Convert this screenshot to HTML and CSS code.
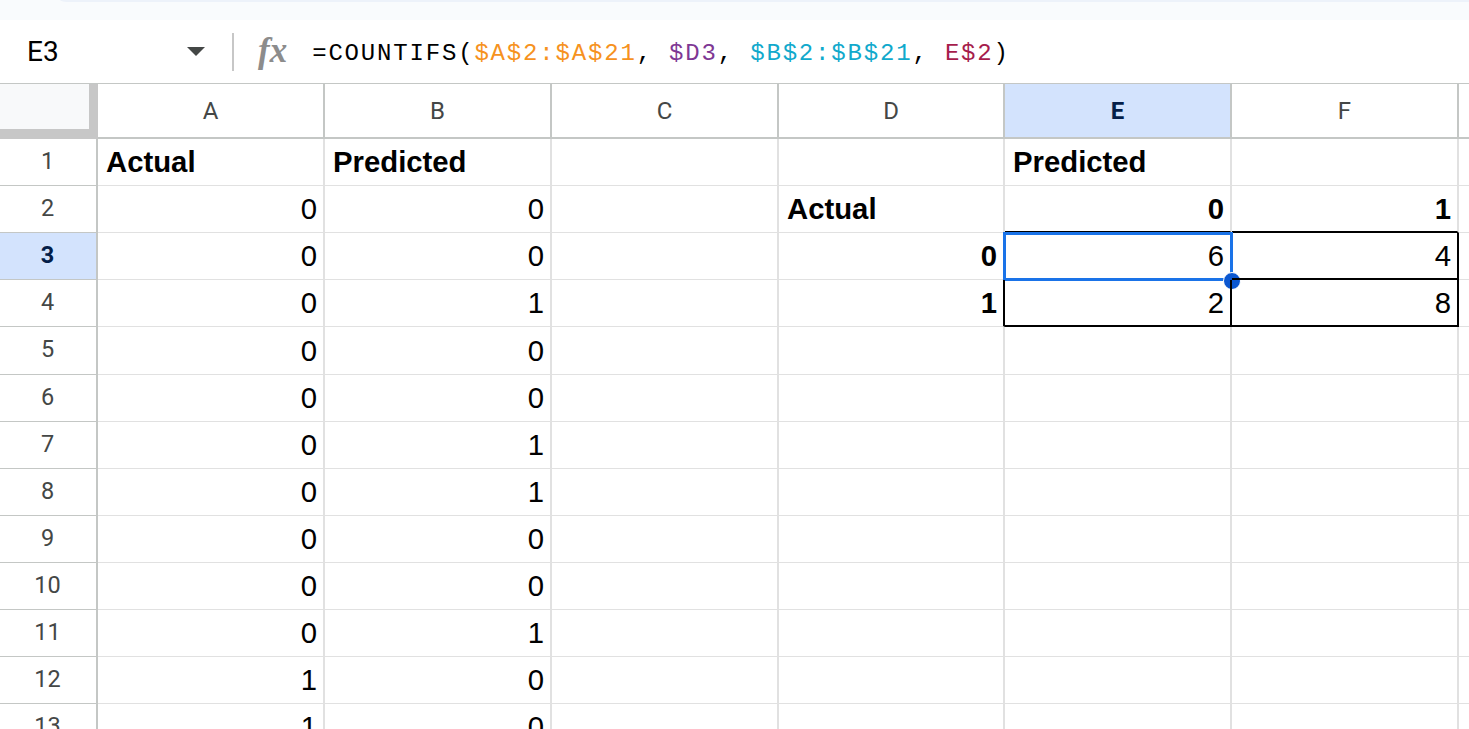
FILE: index.html
```html
<!DOCTYPE html>
<html>
<head>
<meta charset="utf-8">
<link rel="stylesheet" href="styles.css">
</head>
<body>
<div class="top"><div class="top-edge"></div></div>
<div class="fbar">
  <div class="namebox">
    <span class="nb-text">E3</span>
    <svg class="nb-arrow" width="18" height="9" viewBox="0 0 18 9"><polygon points="0,0 18,0 9,9" fill="#444746"/></svg>
  </div>
  <div class="sep"></div>
  <div class="fx">fx</div>
  <div class="formula">=COUNTIFS(<span class="f1">$A$2:$A$21</span>, <span class="f2">$D3</span>, <span class="f3">$B$2:$B$21</span>, <span class="f4">E$2</span>)</div>
</div>
<div class="sheet">
  <div class="corner"></div>
  <div class="ch">A</div><div class="ch">B</div><div class="ch">C</div><div class="ch">D</div><div class="ch ch-sel">E</div><div class="ch">F</div><div class="ch"></div>

  <div class="rh">1</div>
  <div class="c b">Actual</div><div class="c b">Predicted</div><div class="c"></div><div class="c"></div><div class="c b">Predicted</div><div class="c"></div><div class="c"></div>

  <div class="rh">2</div>
  <div class="c r">0</div><div class="c r">0</div><div class="c"></div><div class="c b">Actual</div><div class="c r b kb">0</div><div class="c r b kb">1</div><div class="c"></div>

  <div class="rh rh-sel">3</div>
  <div class="c r">0</div><div class="c r">0</div><div class="c"></div><div class="c r b kr">0</div>
  <div class="c r kr kb cur">6<div class="selbox"></div><div class="handle"></div></div>
  <div class="c r kr kb">4</div><div class="c"></div>

  <div class="rh">4</div>
  <div class="c r">0</div><div class="c r">1</div><div class="c"></div><div class="c r b kr">1</div><div class="c r kr kb">2</div><div class="c r kr kb">8</div><div class="c"></div>

  <div class="rh">5</div>
  <div class="c r">0</div><div class="c r">0</div><div class="c"></div><div class="c"></div><div class="c"></div><div class="c"></div><div class="c"></div>

  <div class="rh">6</div>
  <div class="c r">0</div><div class="c r">0</div><div class="c"></div><div class="c"></div><div class="c"></div><div class="c"></div><div class="c"></div>

  <div class="rh">7</div>
  <div class="c r">0</div><div class="c r">1</div><div class="c"></div><div class="c"></div><div class="c"></div><div class="c"></div><div class="c"></div>

  <div class="rh">8</div>
  <div class="c r">0</div><div class="c r">1</div><div class="c"></div><div class="c"></div><div class="c"></div><div class="c"></div><div class="c"></div>

  <div class="rh">9</div>
  <div class="c r">0</div><div class="c r">0</div><div class="c"></div><div class="c"></div><div class="c"></div><div class="c"></div><div class="c"></div>

  <div class="rh">10</div>
  <div class="c r">0</div><div class="c r">0</div><div class="c"></div><div class="c"></div><div class="c"></div><div class="c"></div><div class="c"></div>

  <div class="rh">11</div>
  <div class="c r">0</div><div class="c r">1</div><div class="c"></div><div class="c"></div><div class="c"></div><div class="c"></div><div class="c"></div>

  <div class="rh">12</div>
  <div class="c r">1</div><div class="c r">0</div><div class="c"></div><div class="c"></div><div class="c"></div><div class="c"></div><div class="c"></div>

  <div class="rh">13</div>
  <div class="c r">1</div><div class="c r">0</div><div class="c"></div><div class="c"></div><div class="c"></div><div class="c"></div><div class="c"></div>
</div>
</body>
</html>
```

FILE: styles.css
```css
* { box-sizing: border-box; }
html, body { margin: 0; padding: 0; }
body {
  width: 1469px;
  height: 729px;
  overflow: hidden;
  background: #ffffff;
  font-family: "Liberation Sans", Arial, sans-serif;
}
.top {
  height: 20px;
  background: #f9fbfd;
}
.top-edge {
  margin-left: 60px;
  height: 2px;
  background: #edf2fa;
  border-bottom-left-radius: 10px 2px;
}
.fbar {
  height: 64px;
  display: flex;
  align-items: center;
  border-bottom: 1px solid #c4c7c5;
  background: #ffffff;
}
.namebox {
  width: 232px;
  padding-left: 27px;
  padding-right: 27px;
  display: flex;
  align-items: center;
  justify-content: space-between;
}
.nb-text {
  font-family: Roboto, "Liberation Sans", sans-serif;
  font-size: 28px;
  color: #000000;
  line-height: 1;
}
.nb-arrow { display: block; }
.sep {
  width: 2px;
  height: 38px;
  background: #c7c7c7;
}
.fx {
  margin-left: 24px;
  font-family: "Liberation Serif", serif;
  font-style: italic;
  font-weight: bold;
  font-size: 35px;
  color: #8c8c8c;
  line-height: 1;
  margin-top: -2px;
}
.formula {
  margin-left: 25px;
  font-family: "Liberation Mono", monospace;
  font-size: 24px;
  letter-spacing: 1.82px;
  color: #000000;
  line-height: 1;
  margin-top: 4px;
}
.f1 { color: #f6921e; }
.f2 { color: #7e3794; }
.f3 { color: #11a9cc; }
.f4 { color: #a61d4c; }

.sheet {
  display: grid;
  grid-template-columns: 98px 227px 227px 227px 226px 227px 227px 1fr;
  grid-template-rows: 55px 47px 47px 47px 47px 48px 47px 47px 47px 47px 47px 47px 47px 47px;
}
.corner {
  background: #f8f9fa;
  border-right: 9px solid #c7c7c7;
  border-bottom: 10px solid #c7c7c7;
}
.ch {
  display: flex;
  align-items: center;
  justify-content: center;
  font-family: Roboto, "Liberation Sans", sans-serif;
  font-size: 24px;
  color: #444746;
  border-right: 2px solid #c4c7c5;
  border-bottom: 2px solid #c4c7c5;
  background: #ffffff;
  padding-top: 1px;
}
.ch-sel {
  background: #d3e3fd;
  color: #041e49;
  font-weight: bold;
}
.rh {
  display: flex;
  align-items: center;
  justify-content: center;
  padding-bottom: 3px;
  padding-right: 1px;
  font-family: Roboto, "Liberation Sans", sans-serif;
  font-size: 23.5px;
  color: #444746;
  border-right: 2px solid #c4c7c5;
  border-bottom: 1px solid #c4c7c5;
  background: #ffffff;
}
.rh-sel {
  background: #d3e3fd;
  color: #041e49;
  font-weight: bold;
}
.c {
  position: relative;
  display: flex;
  align-items: flex-end;
  padding: 0 6px 9px 8px;
  font-size: 29.3px;
  line-height: 1;
  color: #000000;
  border-right: 2px solid #e1e1e1;
  border-bottom: 1px solid #e1e1e1;
  white-space: nowrap;
}
.r { justify-content: flex-end; }
.b { font-weight: bold; }
.kr { border-right: 2px solid #000000; }
.kb { border-bottom: 2px solid #000000; }
.kb.c { padding-bottom: 8px; }
.selbox {
  position: absolute;
  left: -2px;
  top: -1px;
  right: -3px;
  bottom: -3px;
  border: 3px solid #1a73e8;
}
.handle {
  position: absolute;
  right: -11px;
  bottom: -12px;
  width: 18px;
  height: 18px;
  border-radius: 50%;
  background: #0b57d0;
  border: 1px solid #ffffff;
}
```
